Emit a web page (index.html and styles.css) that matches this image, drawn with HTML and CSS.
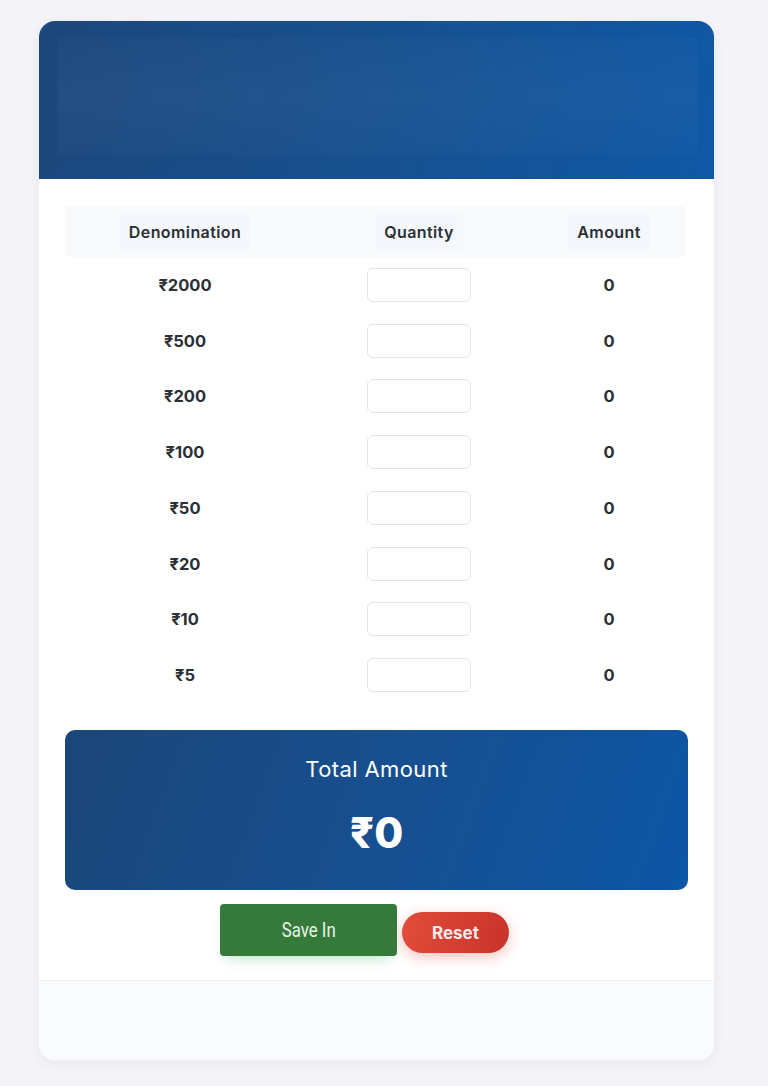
FILE: index.html
```html
<!DOCTYPE html>
<html lang="en">
<head>
<meta charset="utf-8">
<title>Cash Denomination</title>
<link rel="stylesheet" href="styles.css">
</head>
<body>
<div class="card">
  <div class="hero"><div class="hero-inner"></div></div>
  <div class="content">
    <div class="table">
      <div class="thead">
        <div class="th"><span>Denomination</span></div>
        <div class="th"><span>Quantity</span></div>
        <div class="th"><span>Amount</span></div>
      </div>
      <div class="row"><div class="den">₹2000</div><div class="qty"><input type="text"></div><div class="amt">0</div></div>
      <div class="row"><div class="den">₹500</div><div class="qty"><input type="text"></div><div class="amt">0</div></div>
      <div class="row"><div class="den">₹200</div><div class="qty"><input type="text"></div><div class="amt">0</div></div>
      <div class="row"><div class="den">₹100</div><div class="qty"><input type="text"></div><div class="amt">0</div></div>
      <div class="row"><div class="den">₹50</div><div class="qty"><input type="text"></div><div class="amt">0</div></div>
      <div class="row"><div class="den">₹20</div><div class="qty"><input type="text"></div><div class="amt">0</div></div>
      <div class="row"><div class="den">₹10</div><div class="qty"><input type="text"></div><div class="amt">0</div></div>
      <div class="row"><div class="den">₹5</div><div class="qty"><input type="text"></div><div class="amt">0</div></div>
    </div>
    <div class="total">
      <div class="total-label">Total Amount</div>
      <div class="total-value">₹0</div>
    </div>
    <div class="actions">
      <button class="btn-save"><span class="narrow">Save In</span></button>
      <button class="btn-reset">Reset</button>
    </div>
  </div>
  <div class="footer"></div>
</div>
</body>
</html>
```
FILE: styles.css
```css
* { box-sizing: border-box; }
html, body { margin: 0; }
body {
  background: #f3f3f8;
  font-family: Inter, "Noto Sans", "DejaVu Sans", sans-serif;
  color: #2b2f36;
  padding: 21px 0 26px 39px;
}
.card {
  width: 675px;
  background: #ffffff;
  border-radius: 16px;
  box-shadow: 0 0 0 1px #eceff4, 0 4px 14px rgba(30, 50, 90, 0.05);
  overflow: hidden;
}
.hero {
  height: 158px;
  background: linear-gradient(100deg, #1c477c 0%, #17508f 50%, #0f58a6 100%);
  padding: 17px 17px 24px 19px;
}
.hero-inner {
  height: 100%;
  background: linear-gradient(180deg, rgba(255,255,255,0.015), rgba(255,255,255,0.035) 50%, rgba(255,255,255,0.015));
  box-shadow: 0 0 10px rgba(255,255,255,0.02);
}
.content {
  padding: 27px 26px 24px 26px;
}
.table { width: 620px; }
.thead, .row {
  display: grid;
  grid-template-columns: 240px 228px 152px;
  align-items: center;
}
.thead {
  height: 51px;
  background: #f8fafc;
  border-radius: 4px;
}
.th {
  text-align: center;
  font-size: 16px;
  font-weight: 600;
  letter-spacing: 0.4px;
  color: #2b2f36;
}
.th span {
  display: inline-block;
  padding: 8px 9px;
  background: #f4f7fb;
  border-radius: 4px;
}
.row { height: 55.75px; }
.den, .amt {
  text-align: center;
  font-size: 16.5px;
  font-weight: 700;
  color: #2b2f36;
}
.qty { display: flex; justify-content: center; }
.qty input {
  width: 104px;
  height: 34px;
  border: 1.5px solid #dfe5ec;
  border-radius: 6px;
  background: #ffffff;
  font: inherit;
  outline: none;
}
.total {
  margin-top: 27px;
  height: 160px;
  border-radius: 10px;
  background: linear-gradient(110deg, #1b4679 0%, #174f8f 50%, #0c56a6 100%);
  color: #ffffff;
  text-align: center;
  padding-top: 25px;
}
.total-label {
  font-size: 22px;
  font-weight: 400;
  letter-spacing: 0.4px;
  line-height: 28px;
}
.total-value {
  margin-top: 28px;
  font-size: 42px;
  font-weight: 800;
  line-height: 44px;
}
.actions {
  margin-top: 14px;
  display: flex;
  justify-content: center;
  align-items: center;
  gap: 5px;
  padding-right: 24px;
}
.btn-save {
  width: 177px;
  height: 52px;
  border: none;
  border-radius: 4px;
  background: #357a3b;
  color: #e8f3e6;
  font-family: Roboto, "Liberation Sans", sans-serif;
  font-size: 21px;
  box-shadow: 0 8px 14px -6px rgba(60, 180, 110, 0.35);
}
.narrow {
  display: inline-block;
  transform: scaleX(0.8);
}
.btn-reset {
  margin-top: 5px;
  width: 107px;
  height: 41px;
  border: none;
  border-radius: 21px;
  background: linear-gradient(100deg, #e24c3a, #c8332a);
  color: #fbecea;
  font-family: Inter, "Noto Sans", sans-serif;
  font-size: 17px;
  font-weight: 700;
  box-shadow: 0 4px 14px rgba(230, 80, 60, 0.35);
}
.footer {
  height: 80px;
  background: #fafbfd;
  border-top: 1px solid #eef1f5;
}
```
